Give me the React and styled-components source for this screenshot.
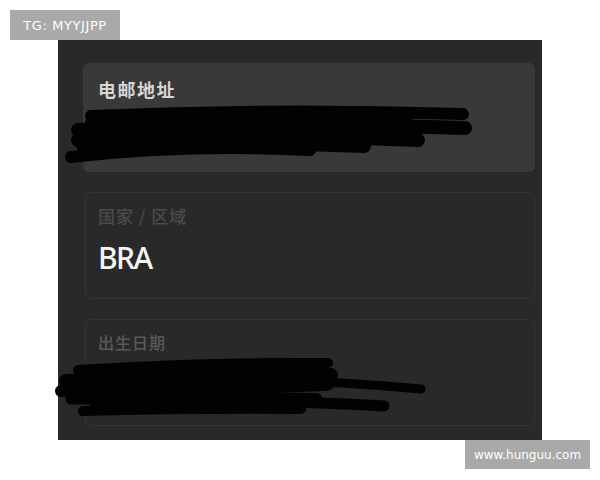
import React from "react";
import styled, { createGlobalStyle } from "styled-components";

const Global = createGlobalStyle`
  html, body { margin: 0; padding: 0; background: #ffffff; }
  body { font-family: "Noto Sans", "Noto Sans CJK SC", sans-serif; }
`;

const Page = styled.div`
  width: 600px;
  height: 480px;
  display: flex;
  flex-direction: column;
`;

const TagRow = styled.div`
  display: flex;
  padding: 10px 0 0 10px;
`;

const Tag = styled.div`
  width: ${(p) => p.$w}px;
  height: ${(p) => p.$h}px;
  display: flex;
  align-items: center;
  justify-content: center;
  background: #a9a9a9;
  color: #ffffff;
  font-family: "DejaVu Sans", sans-serif;
  font-size: ${(p) => p.$size}px;
  letter-spacing: ${(p) => p.$ls}px;
`;

const FootRow = styled.div`
  display: flex;
  justify-content: flex-end;
  padding-right: 10px;
`;

const Panel = styled.div`
  margin-left: 58px;
  width: 484px;
  height: 400px;
  box-sizing: border-box;
  background: #2a292a;
  padding: 23px 7px 0 27px;
  display: flex;
  flex-direction: column;
  gap: 20px;
`;

const Card = styled.div`
  position: relative;
  box-sizing: border-box;
  height: ${(p) => p.$h}px;
  margin-left: ${(p) => (p.$filled ? -2 : 0)}px;
  border-radius: 6px;
  background: ${(p) => (p.$filled ? "#3a393a" : "#2a292a")};
  border: 1px solid ${(p) => (p.$filled ? "#3a393a" : "#343334")};
  padding: ${(p) => p.$pt}px 14px 0 ${(p) => (p.$filled ? 14 : 12)}px;
`;

const Label = styled.div`
  font-family: "Noto Sans CJK SC", sans-serif;
  font-size: ${(p) => p.$size}px;
  line-height: 1.2;
  font-weight: ${(p) => p.$weight};
  letter-spacing: ${(p) => p.$ls}px;
  color: ${(p) => p.$color};
`;

const Value = styled.div`
  margin-top: 14px;
  font-family: "Noto Sans", sans-serif;
  font-size: 30px;
  line-height: 1.2;
  font-weight: 500;
  letter-spacing: -1.5px;
  color: #f4f4f4;
`;

const Ink = styled.svg`
  position: absolute;
  left: 0;
  top: 0;
  overflow: visible;
  pointer-events: none;
`;

/* black marker strokes drawn over a field's value */
function Marker({ strokes }) {
  return (
    <Ink width="1" height="1">
      {strokes.map(([d, w], i) => (
        <path key={i} d={d} stroke="#020202" strokeWidth={w} strokeLinecap="round" fill="none" />
      ))}
    </Ink>
  );
}

const emailStrokes = [
  ["M7 52 Q190 44 379 50", 12],
  ["M-6 66 Q150 57 381 64", 14],
  ["M-6 76 Q160 69 334 76", 14],
  ["M10 60 Q160 56 320 58", 18],
  ["M-13 93 Q100 80 226 86", 12],
  ["M0 84 Q120 76 280 82", 14],
  ["M40 70 Q180 64 300 70", 18],
];

const birthStrokes = [
  ["M-8 50 Q120 42 242 43", 10],
  ["M-20 61 Q110 53 245 55", 14],
  ["M185 60 Q260 62 335 69", 9],
  ["M-25 71 Q100 64 215 66", 12],
  ["M-15 79 Q150 78 298 86", 11],
  ["M-3 91 Q110 88 215 89", 10],
  ["M0 70 Q120 66 240 62", 18],
  ["M10 82 Q120 78 230 80", 14],
];

export default function App() {
  return (
    <Page>
      <Global />
      <TagRow>
        <Tag $w={110} $h={30} $size={13} $ls={0.6}>TG: MYYJJPP</Tag>
      </TagRow>
      <Panel>
        <Card $filled $h={109} $pt={15}>
          <Label $size={18} $weight={700} $ls={1.5} $color="#d6d6d6">电邮地址</Label>
          <Marker strokes={emailStrokes} />
        </Card>
        <Card $h={107} $pt={13}>
          <Label $size={17} $weight={500} $ls={1} $color="#4a494a">国家 / 区域</Label>
          <Value>BRA</Value>
        </Card>
        <Card $h={107} $pt={13}>
          <Label $size={16} $weight={500} $ls={1} $color="#5a595a">出生日期</Label>
          <Marker strokes={birthStrokes} />
        </Card>
      </Panel>
      <FootRow>
        <Tag $w={125} $h={29} $size={12} $ls={0}>www.hunguu.com</Tag>
      </FootRow>
    </Page>
  );
}
